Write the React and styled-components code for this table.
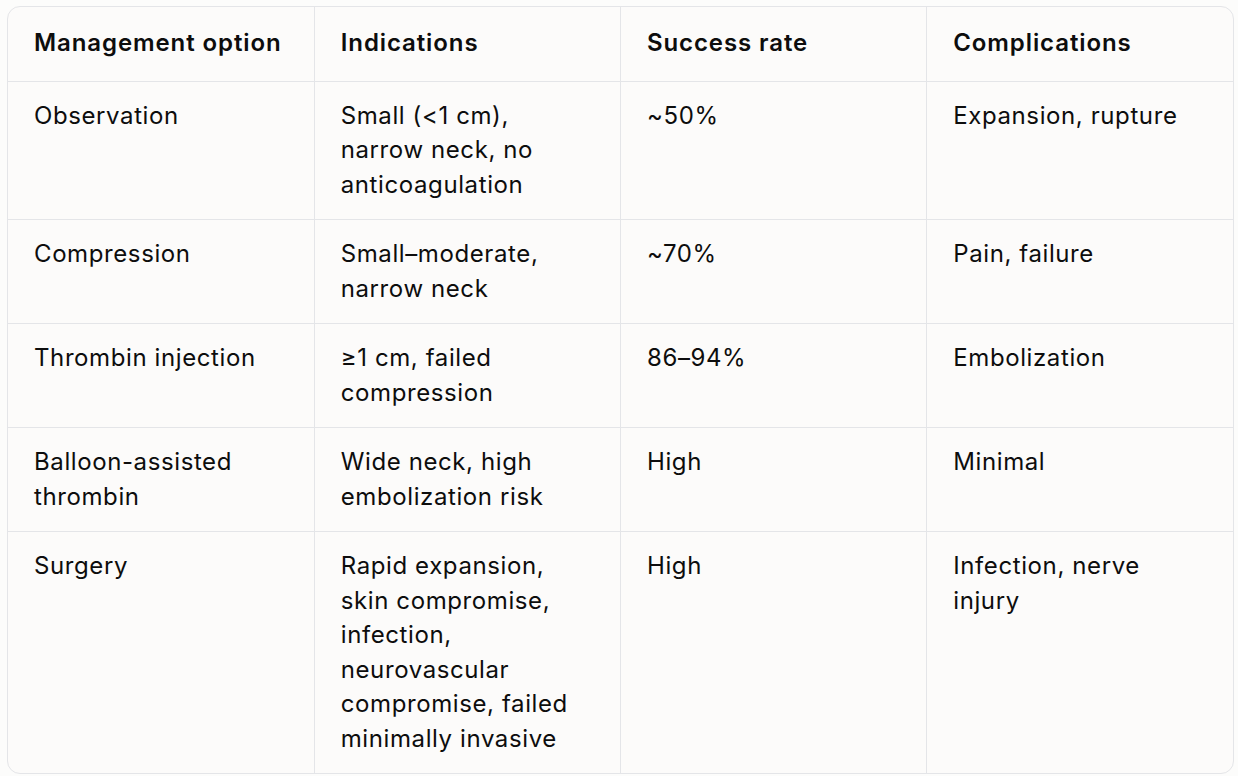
import styled, { createGlobalStyle } from 'styled-components'

const GlobalStyle = createGlobalStyle`
    html, body {
        margin: 0;
        padding: 0;
        background: #fcfcfb;
    }
    body {
        font-family: 'Inter', 'Liberation Sans', sans-serif;
        color: #0d0d0d;
    }
`

const columns = ['Management option', 'Indications', 'Success rate', 'Complications']

const rows = [
    ['Observation', 'Small (<1 cm), narrow neck, no anticoagulation', '~50%', 'Expansion, rupture'],
    ['Compression', 'Small–moderate, narrow neck', '~70%', 'Pain, failure'],
    ['Thrombin injection', '≥1 cm, failed compression', '86–94%', 'Embolization'],
    ['Balloon-assisted thrombin', 'Wide neck, high embolization risk', 'High', 'Minimal'],
    ['Surgery', 'Rapid expansion, skin compromise, infection, neurovascular compromise, failed minimally invasive', 'High', 'Infection, nerve injury'],
]

const App = () => {
    return (
        <Page>
            <GlobalStyle />
            <Frame>
                <Table>
                    <thead>
                        <tr>
                            {columns.map((c, i) => (
                                <HeadCell key={c} $first={i === 0}>{c}</HeadCell>
                            ))}
                        </tr>
                    </thead>
                    <tbody>
                        {rows.map((r, ri) => (
                            <Row key={ri} $last={ri === rows.length - 1}>
                                {r.map((cell, ci) => (
                                    <Cell key={ci} $first={ci === 0}>{cell}</Cell>
                                ))}
                            </Row>
                        ))}
                    </tbody>
                </Table>
            </Frame>
        </Page>
    )
}

export default App

const Page = styled.div`
    padding: 6px 4px 2px 7px;
`

const Frame = styled.div`
    border: 1px solid #e4e5e8;
    border-radius: 13px;
    overflow: hidden;
    background: #fcfbfa;
`

const Table = styled.table`
    width: 100%;
    table-layout: fixed;
    border-collapse: collapse;
    font-size: 24px;
    line-height: 34.5px;
    letter-spacing: 0.6px;
`

const HeadCell = styled.th`
    text-align: left;
    font-weight: 600;
    letter-spacing: 0.9px;
    padding: 19px 26px 20px 26px;
    border-bottom: 1px solid #e4e5e8;
    border-left: ${p => (p.$first ? 'none' : '1px solid #e4e5e8')};
    vertical-align: top;
`

const Row = styled.tr`
    border-bottom: ${p => (p.$last ? 'none' : '1px solid #e4e5e8')};
`

const Cell = styled.td`
    padding: 17px 40px 17px 26px;
    vertical-align: top;
    border-left: ${p => (p.$first ? 'none' : '1px solid #e4e5e8')};
`
